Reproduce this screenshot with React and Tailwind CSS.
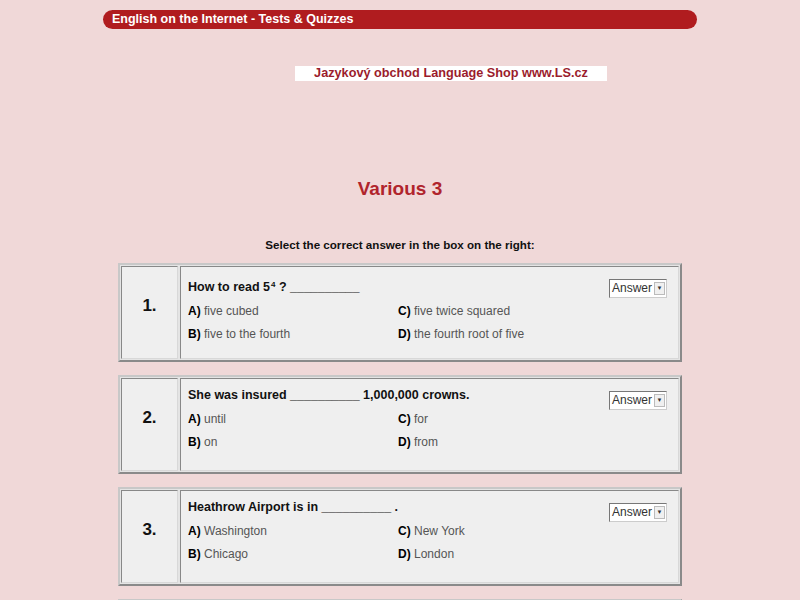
import React from 'react';

const questions = [
  {
    n: '1.',
    tall: true,
    q: (
      <>
        How to read 5<sup className="text-[8px] font-bold relative -top-[4px] ml-[1px]">4</sup> ? __________
      </>
    ),
    a: ['five cubed', 'five to the fourth', 'five twice squared', 'the fourth root of five'],
  },
  {
    n: '2.',
    q: <>She was insured __________ 1,000,000 crowns.</>,
    a: ['until', 'on', 'for', 'from'],
  },
  {
    n: '3.',
    q: <>Heathrow Airport is in __________ .</>,
    a: ['Washington', 'Chicago', 'New York', 'London'],
  },
];

function Option({ label, text }) {
  return (
    <div className="h-[23px] leading-[23px] text-[12px] text-[#555]">
      <span className="font-bold text-black">{label}</span> {text}
    </div>
  );
}

function Frame({ children }) {
  return (
    <div className="w-[564px] h-[99px] shrink-0 flex gap-[2px] p-[1px] border-2 border-t-[#c8c8c8] border-l-[#c8c8c8] border-r-[#8a8a8a] border-b-[#8a8a8a] bg-[#e4e4e4]">
      {children}
    </div>
  );
}

const cell = 'bg-[#efefef] border border-t-[#888] border-l-[#888] border-r-[#d8d8d8] border-b-[#d8d8d8]';

function Question({ n, q, a, tall }) {
  return (
    <Frame>
      <div className={`w-[57px] flex items-center justify-center pb-[14px] text-[17px] font-bold text-[#111] ${cell}`}>
        {n}
      </div>
      <div className={`flex-1 relative pl-[7px] ${tall ? 'pt-[12px]' : 'pt-[8px]'} ${cell}`}>
        <div className="h-[21px] text-[12.5px] font-bold text-[#111] leading-[17px]">{q}</div>
        <div className="flex">
          <div className="w-[210px]">
            <Option label="A)" text={a[0]} />
            <Option label="B)" text={a[1]} />
          </div>
          <div>
            <Option label="C)" text={a[2]} />
            <Option label="D)" text={a[3]} />
          </div>
        </div>
        <div className="absolute right-[11px] top-[12px] h-[19px] w-[58px] flex items-center justify-between bg-white border border-t-[#777] border-l-[#777] border-r-[#ccc] border-b-[#ccc] pl-[2px] pr-[1px] text-[12px] text-[#333]">
          <span>Answer</span>
          <span className="w-[11px] h-[13px] flex items-center justify-center bg-[#f0f0f0] border border-[#bbb] text-[6px] leading-none">▼</span>
        </div>
      </div>
    </Frame>
  );
}

export default function App() {
  return (
    <div className="w-[800px] h-[600px] overflow-hidden bg-[#f0d8d8] font-['Liberation_Sans',Arial,sans-serif] flex flex-col items-center">
      <div className="mt-[10px] w-[594px] h-[20px] rounded-full bg-[#b01c1f] flex items-center pl-[9px] text-[12.5px] font-bold text-white">
        English on the Internet - Tests &amp; Quizzes
      </div>
      <div className="mt-[37px] ml-[102px] w-[312px] h-[15px] bg-white flex items-center justify-center text-[12.7px] font-bold text-[#9b1c2c]">
        Jazykový obchod Language Shop www.LS.cz
      </div>
      <div className="mt-[97px] text-[19px] font-bold text-[#b0242c] leading-[22px]">Various 3</div>
      <div className="mt-[38px] text-[11.6px] font-bold text-[#111] leading-[14px]">
        Select the correct answer in the box on the right:
      </div>
      <div className="mt-[11px] flex flex-col gap-[13px]">
        {questions.map((item) => (
          <Question key={item.n} {...item} />
        ))}
        {/* next question continues below the fold */}
        <Frame>
          <div className={`w-[57px] ${cell}`} />
          <div className={`flex-1 ${cell}`} />
        </Frame>
      </div>
    </div>
  );
}
